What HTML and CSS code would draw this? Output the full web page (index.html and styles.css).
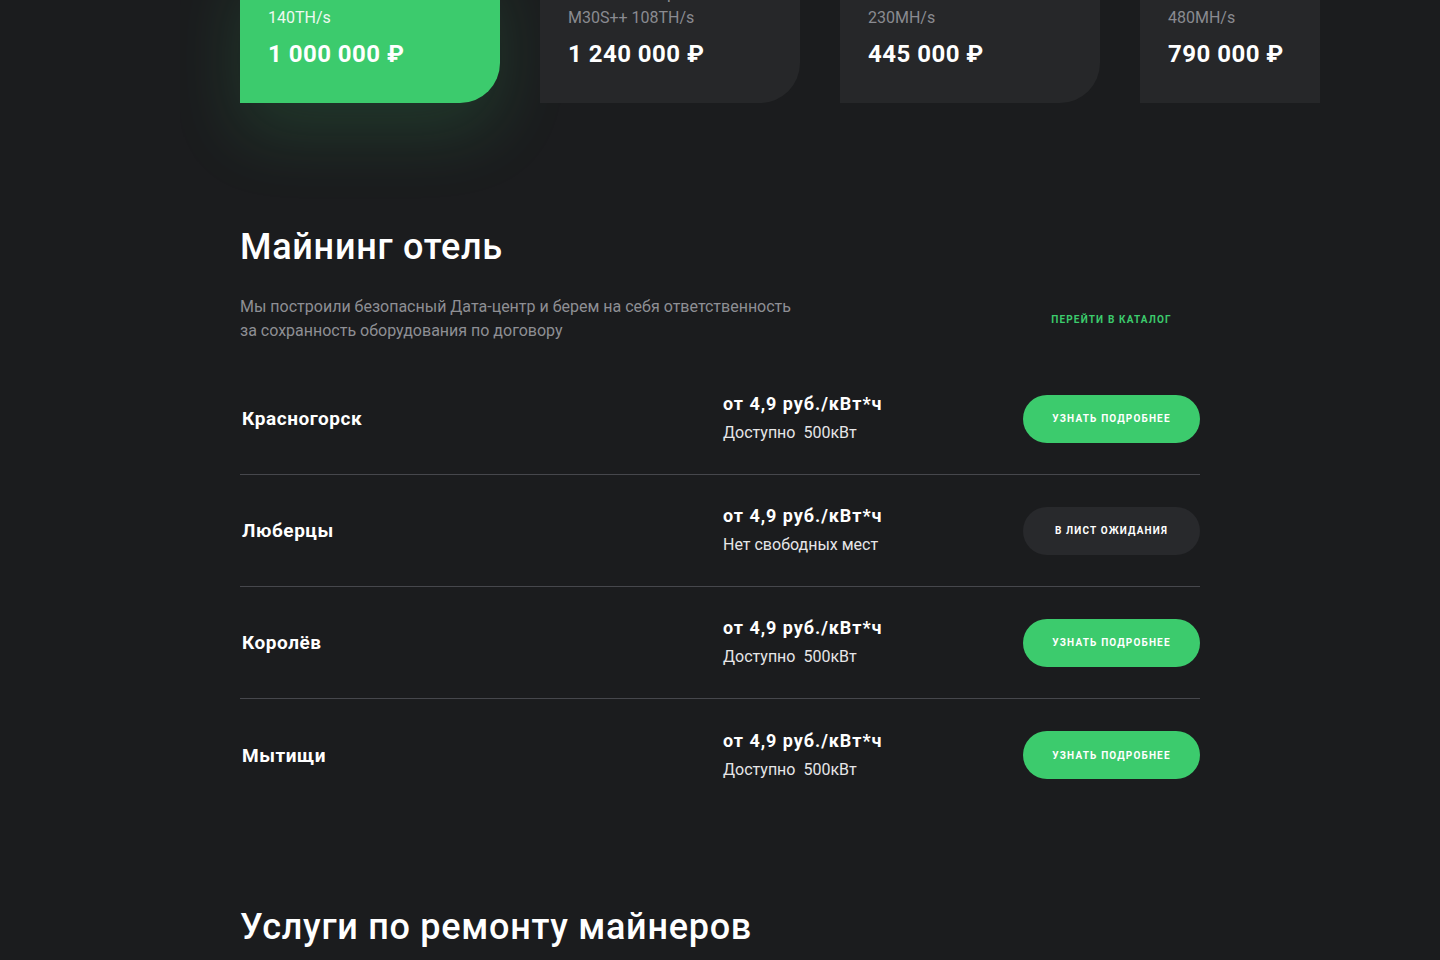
FILE: index.html
```html
<!DOCTYPE html>
<html lang="ru">
<head>
<meta charset="utf-8">
<title>Майнинг отель</title>
<link rel="stylesheet" href="styles.css">
</head>
<body>
<div class="page">
  <section class="slider">
    <div class="slider-track">
      <div class="card card-active">
        <div class="card-name">Antminer S19 XP</div>
        <div class="card-spec">140TH/s</div>
        <div class="card-price">1 000 000 ₽</div>
      </div>
      <div class="card">
        <div class="card-name">Whatsminer пр</div>
        <div class="card-spec">M30S++ 108TH/s</div>
        <div class="card-price">1 240 000 ₽</div>
      </div>
      <div class="card">
        <div class="card-name">Innosilicon A10</div>
        <div class="card-spec">230MH/s</div>
        <div class="card-price">445 000 ₽</div>
      </div>
      <div class="card">
        <div class="card-name">Jasminer X4</div>
        <div class="card-spec">480MH/s</div>
        <div class="card-price">790 000 ₽</div>
      </div>
    </div>
  </section>

  <section class="hotel">
    <h2 class="title">Майнинг отель</h2>
    <div class="hotel-intro">
      <p class="hotel-text">Мы построили безопасный Дата-центр и берем на себя ответственность за сохранность оборудования по договору</p>
      <a class="btn btn-link" href="#">Перейти в каталог</a>
    </div>
    <div class="locations">
      <div class="loc">
        <div class="loc-city">Красногорск</div>
        <div class="loc-info">
          <div class="loc-price">от 4,9 руб./кВт*ч</div>
          <div class="loc-avail">Доступно&nbsp; 500кВт</div>
        </div>
        <a class="btn btn-green" href="#">Узнать подробнее</a>
      </div>
      <div class="loc">
        <div class="loc-city">Люберцы</div>
        <div class="loc-info">
          <div class="loc-price">от 4,9 руб./кВт*ч</div>
          <div class="loc-avail">Нет свободных мест</div>
        </div>
        <a class="btn btn-dark" href="#">В лист ожидания</a>
      </div>
      <div class="loc">
        <div class="loc-city">Королёв</div>
        <div class="loc-info">
          <div class="loc-price">от 4,9 руб./кВт*ч</div>
          <div class="loc-avail">Доступно&nbsp; 500кВт</div>
        </div>
        <a class="btn btn-green" href="#">Узнать подробнее</a>
      </div>
      <div class="loc">
        <div class="loc-city">Мытищи</div>
        <div class="loc-info">
          <div class="loc-price">от 4,9 руб./кВт*ч</div>
          <div class="loc-avail">Доступно&nbsp; 500кВт</div>
        </div>
        <a class="btn btn-green" href="#">Узнать подробнее</a>
      </div>
    </div>
  </section>

  <section class="repair">
    <h2 class="title">Услуги по ремонту майнеров</h2>
  </section>
</div>
</body>
</html>
```

FILE: styles.css
```css
* { box-sizing: border-box; }

html, body {
  margin: 0;
  padding: 0;
  background: #1b1c1e;
  color: #ffffff;
  font-family: Roboto, "Noto Sans", "Liberation Sans", sans-serif;
  overflow: hidden;
}

.page {
  width: 960px;
  margin: -46px auto 0;
}

/* slider */
.slider {
  width: 1140px;
  overflow: hidden;
  padding: 0 0 120px 60px;
  margin-left: -60px;
  margin-bottom: -120px;
}

.slider-track {
  display: flex;
  gap: 40px;
}

.card {
  flex: 0 0 260px;
  background: #262729;
  border-radius: 0 0 40px 0;
  padding: 28px 28px 33px;
}

.card-active {
  background: #3ccb6d;
  box-shadow: 0 30px 70px rgba(60, 203, 109, 0.16);
}

.card-name,
.card-spec {
  font-size: 16px;
  line-height: 24px;
  color: #8a8b91;
}

.card-active .card-name,
.card-active .card-spec {
  color: #eef9f1;
}

.card-price {
  margin-top: 8px;
  font-size: 24px;
  line-height: 32px;
  font-weight: 700;
  letter-spacing: 0.47px;
  color: #ffffff;
}

/* hotel */
.hotel {
  margin-top: 122px;
}

.title {
  margin: 0;
  font-size: 36px;
  line-height: 44px;
  font-weight: 500;
  letter-spacing: 0.72px;
  color: #ffffff;
}

.hotel-intro {
  margin-top: 26px;
  display: flex;
  align-items: center;
  justify-content: space-between;
}

.hotel-text {
  margin: 0;
  max-width: 560px;
  font-size: 16px;
  line-height: 24px;
  color: #8e8f94;
}

.btn {
  display: flex;
  align-items: center;
  justify-content: center;
  width: 177px;
  height: 48px;
  border-radius: 24px;
  font-size: 10px;
  font-weight: 700;
  letter-spacing: 1.15px;
  text-transform: uppercase;
  text-decoration: none;
  color: #ffffff;
  flex: 0 0 auto;
}

.btn-link {
  color: #3ccb6d;
}

.btn-green {
  background: #3ccb6d;
}

.btn-dark {
  background: #28292c;
}

.locations {
  margin-top: 20px;
}

.loc {
  display: grid;
  grid-template-columns: 483px 1fr 177px;
  align-items: center;
  height: 112px;
  border-bottom: 1px solid #46474c;
}

.loc:last-child {
  border-bottom: none;
}

.loc-city {
  padding-left: 2px;
  font-size: 19px;
  font-weight: 700;
  letter-spacing: 0.55px;
  color: #ffffff;
}

.loc-price {
  font-size: 18px;
  line-height: 24px;
  font-weight: 700;
  letter-spacing: 0.95px;
  color: #ffffff;
}

.loc-avail {
  margin-top: 5px;
  font-size: 16px;
  line-height: 24px;
  color: #e6e6e8;
}

/* repair */
.repair {
  margin-top: 94px;
}
```
